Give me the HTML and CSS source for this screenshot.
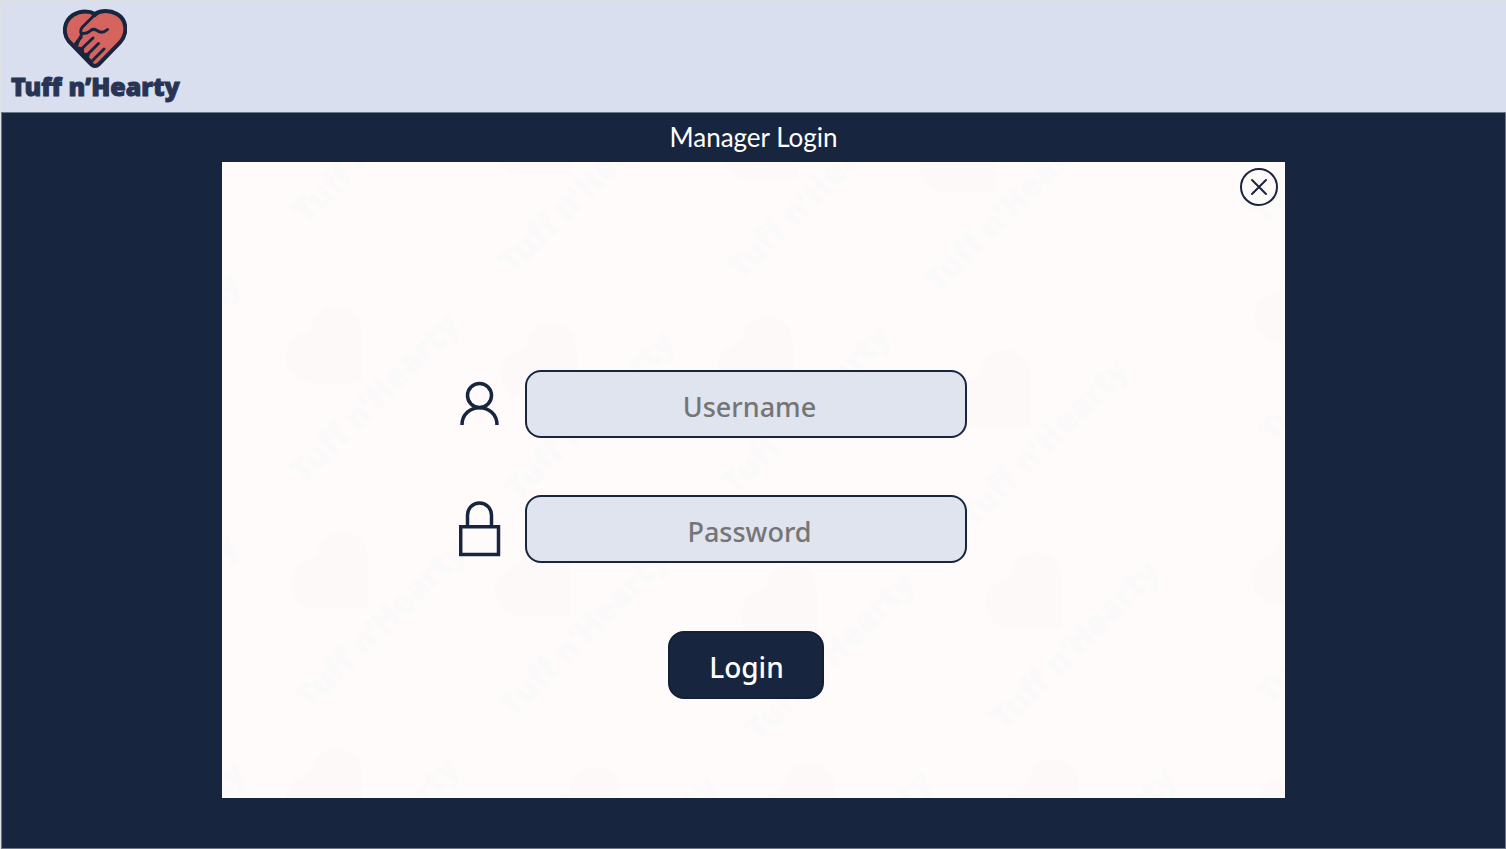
FILE: index.html
```html
<!DOCTYPE html>
<html lang="en">
<head>
  <meta charset="utf-8">
  <meta name="viewport" content="width=device-width, initial-scale=1">
  <title>Tuff n'Hearty - Manager Login</title>
  <link rel="stylesheet" href="styles.css">
</head>
<body>
  <header class="site-header">
    <div class="brand">
      <svg class="brand-mark" viewBox="0 0 64 58" aria-hidden="true">
        <path class="mark-heart" d="M32 4.500C27 1.500 18 .5 10 5.500C.5 12 -.5 24 6 32L28 54.500Q32 58.500 36 54.500L57 33C65.500 23 63.500 10 54 4.500C47 .5 38 .5 32 4.500Z"/>
        <path class="mark-wedge" d="M26 2.500H38L32 8ZM17 26L11 34L29 54L31 52L26 48L27 44L21 43L21 38L15 37L17 31L20 28Z"/>
        <path class="mark-line" d="M32 5L19.500 17.500Q16.500 21 18.500 24.500Q18.500 28 13 34"/>
        <path class="mark-line" d="M18.500 24Q24 24.500 27 21.500Q30 18.500 34 21Q39 25 44.500 20"/>
        <path class="mark-line" d="M30 28.500L20 38M35.500 34L25 44.500M41 39.500L30.500 50"/>
      </svg>
      <span class="brand-name">Tuff n’Hearty</span>
    </div>
  </header>

  <main class="page">
    <h1 class="title">Manager Login</h1>
    <section class="panel">
      <svg class="pattern" viewBox="222 162 1063 636" preserveAspectRatio="xMidYMid slice" aria-hidden="true">
        <defs>
          <g id="stamp">
            <path class="stamp-heart" d="M24 25C28 9 37 0 50 0C66 0 76 12 76 26V71Q76 77 70 77H26C11 77 0 66 0 51C0 38 9 29 24 25Z"/>
            <text class="stamp-text" transform="translate(18 179) rotate(-45)">Tuff n’Hearty</text>
          </g>
        </defs>
        <use href="#stamp" x="289" y="46"/>
        <use href="#stamp" x="495" y="97"/>
        <use href="#stamp" x="723" y="102"/>
        <use href="#stamp" x="920" y="115"/>
        <use href="#stamp" x="1245" y="46"/>
        <use href="#stamp" x="67" y="265"/>
        <use href="#stamp" x="286" y="306"/>
        <use href="#stamp" x="501" y="323"/>
        <use href="#stamp" x="717" y="317"/>
        <use href="#stamp" x="955" y="350"/>
        <use href="#stamp" x="1255" y="266"/>
        <use href="#stamp" x="64" y="526"/>
        <use href="#stamp" x="292" y="532"/>
        <use href="#stamp" x="495" y="540"/>
        <use href="#stamp" x="741" y="564"/>
        <use href="#stamp" x="986" y="552"/>
        <use href="#stamp" x="1252" y="527"/>
        <use href="#stamp" x="72" y="753"/>
        <use href="#stamp" x="286" y="749"/>
        <use href="#stamp" x="545" y="767"/>
        <use href="#stamp" x="759" y="763"/>
        <use href="#stamp" x="1003" y="759"/>
        <use href="#stamp" x="1259" y="751"/>
      </svg>

      <button class="close" type="button" aria-label="Close">
        <svg viewBox="0 0 38 38" aria-hidden="true">
          <circle cx="19" cy="19" r="18"/>
          <path d="M12 12L26 26M26 12L12 26"/>
        </svg>
      </button>

      <form class="login-form">
        <label class="field-icon" for="username" aria-label="Username">
          <svg class="icon" viewBox="0 0 42 56" aria-hidden="true">
            <circle cx="20.500" cy="19.500" r="12"/>
            <path d="M3 49C3 26 38 26 38 49"/>
          </svg>
        </label>
        <input class="field" id="username" type="text" placeholder="Username">
        <label class="field-icon" for="password" aria-label="Password">
          <svg class="icon" viewBox="0 0 42 56" aria-hidden="true">
            <path d="M8.500 25.500V14A12 12 0 0 1 32.500 14V25.500M1.700 25.800H39.500V53.500H1.700Z"/>
          </svg>
        </label>
        <input class="field" id="password" type="password" placeholder="Password">
        <button class="submit" type="submit">Login</button>
      </form>
    </section>
  </main>
</body>
</html>
```

FILE: styles.css
```css
* {
  box-sizing: border-box;
}

body {
  display: flex;
  flex-direction: column;
  min-height: 100vh;
  margin: 0;
  border-top: 1px solid #dfe1e3;
  border-left: 1px solid #dfe1e3;
  background: #d9dfee;
  color: #18253f;
  font-family: "Noto Sans", "Open Sans", sans-serif;
}

.site-header {
  padding: 8px;
}

.brand {
  display: inline-flex;
  flex-direction: column;
  align-items: center;
}

.brand-mark {
  width: 64px;
  height: 59px;
}

.mark-heart {
  fill: #d5645f;
  stroke: #18253f;
  stroke-width: 4;
}

.mark-line {
  fill: none;
  stroke: #18253f;
  stroke-width: 3;
  stroke-linecap: round;
  stroke-linejoin: round;
}

.mark-wedge {
  fill: #18253f;
}

.brand-name {
  padding: 0 2px;
  color: #283455;
  font: 900 25px/36px "Noto Sans", sans-serif;
  font-variant-ligatures: none;
  -webkit-text-stroke: 1px #283455;
}

.page {
  display: flex;
  flex: 1;
  flex-direction: column;
  align-items: center;
  padding-bottom: 50px;
  border: 1px solid #6d778a;
  background: #18253f;
}

.title {
  margin: 0;
  color: #fff;
  font: 400 26px/49px Lato, sans-serif;
}

.panel {
  position: relative;
  display: flex;
  flex: 1;
  align-items: center;
  justify-content: center;
  width: 70.7%;
  padding: 109px 80px 0 0;
  background: #fffbfa;
}

.pattern {
  position: absolute;
  inset: 0;
  width: 100%;
  height: 100%;
}

.stamp-heart {
  fill: #fcf9f8;
}

.stamp-text {
  fill: #fafafb;
  font: 900 33px "Noto Sans", sans-serif;
  font-variant-ligatures: none;
}

.close {
  position: absolute;
  top: 6px;
  right: 7px;
  width: 38px;
  height: 38px;
  padding: 0;
  border: 0;
  border-radius: 50%;
  background: none;
  cursor: pointer;
}

.close svg {
  display: block;
  fill: none;
  stroke: #18253f;
  stroke-width: 2;
  stroke-linecap: round;
}

.login-form {
  position: relative;
  display: grid;
  grid-template-columns: 42px minmax(0, 442px);
  column-gap: 24px;
  align-items: center;
}

.field-icon {
  display: flex;
}

.icon {
  width: 42px;
  height: 56px;
  fill: none;
  stroke: #18253f;
  stroke-width: 3.5;
}

.field {
  width: 442px;
  max-width: 100%;
  height: 68px;
  padding: 4px 12px 0 18px;
  border: 2px solid #18253f;
  border-radius: 16px;
  background: #dfe4ef;
  color: #18253f;
  font: 500 27px "Noto Sans", sans-serif;
  text-align: center;
}

.field::placeholder {
  color: #757575;
  opacity: 1;
}

#password {
  margin: 57px 0;
}

.submit {
  grid-column: 2;
  justify-self: center;
  width: 156px;
  height: 68px;
  margin-top: 11px;
  padding: 4px 0 0;
  border: 2px solid #142039;
  border-radius: 16px;
  background: #18253f;
  color: #fff;
  font: 500 28px "Noto Sans", sans-serif;
  cursor: pointer;
}
```
